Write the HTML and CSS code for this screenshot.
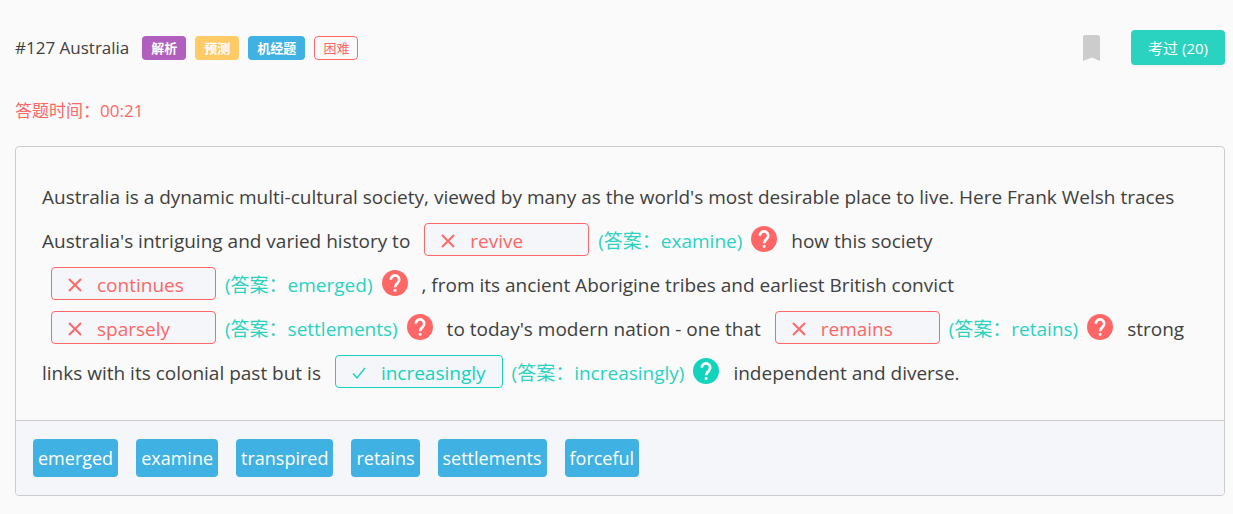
FILE: index.html
```html
<!DOCTYPE html>
<html lang="zh-CN">
<head>
<meta charset="utf-8">
<title>#127 Australia</title>
<meta name="viewport" content="width=device-width, initial-scale=1">
<link rel="stylesheet" href="styles.css">
</head>
<body>
<svg class="sprite" aria-hidden="true">
  <symbol id="cross" viewBox="0 0 14 14"><path d="M1 1l12 12M13 1L1 13" fill="none" stroke="currentColor" stroke-width="1.900"/></symbol>
  <symbol id="check" viewBox="0 0 14 14"><path d="M1 7.500l4 4.500L13 2" fill="none" stroke="currentColor" stroke-width="1.400"/></symbol>
  <symbol id="help" viewBox="0 0 26 26"><circle cx="13" cy="13" r="13" fill="currentColor"/><path d="M8.800 9.700a4.200 4.200 0 1 1 7 3.100c-1.700 1.400-2.700 2.200-2.700 4.400" fill="none" stroke="#fff" stroke-width="2.700"/><rect x="11.700" y="19" width="2.800" height="2.800" rx="1" fill="#fff"/></symbol>
</svg>
<header class="header">
  <h1 class="title">#127 Australia</h1>
  <div class="tags">
    <span class="tag tag-purple">解析</span>
    <span class="tag tag-yellow">预测</span>
    <span class="tag tag-blue">机经题</span>
    <span class="tag tag-outline">困难</span>
  </div>
  <button class="bookmark" type="button" aria-label="收藏"><svg width="18" height="26" viewBox="0 0 18 26"><path d="M2.500 0h12A2.500 2.500 0 0 1 17 2.500V26l-8-3.500L0 26V2.500A2.500 2.500 0 0 1 2.500 0z" fill="#ccc"/></svg></button>
  <button class="passed" type="button">考过 (20)</button>
</header>
<p class="timer">答题时间：00:21</p>
<main class="card">
  <p class="passage">
    Australia is a dynamic multi-cultural society, viewed by many as the world's most desirable place to live. Here Frank Welsh traces Australia's intriguing and varied history to
    <span class="slot wrong"><span class="blank"><svg class="mark"><use href="#cross"/></svg>revive</span><span class="answer">(答案：examine)</span><button class="help" type="button" aria-label="解释"><svg><use href="#help"/></svg></button></span>
    how this society
    <span class="slot wrong"><span class="blank"><svg class="mark"><use href="#cross"/></svg>continues</span><span class="answer">(答案：emerged)</span><button class="help" type="button" aria-label="解释"><svg><use href="#help"/></svg></button></span>
    , from its ancient Aborigine tribes and earliest British convict
    <span class="slot wrong"><span class="blank"><svg class="mark"><use href="#cross"/></svg>sparsely</span><span class="answer">(答案：settlements)</span><button class="help" type="button" aria-label="解释"><svg><use href="#help"/></svg></button></span>
    to today's modern nation - one that
    <span class="slot wrong"><span class="blank"><svg class="mark"><use href="#cross"/></svg>remains</span><span class="answer">(答案：retains)</span><button class="help" type="button" aria-label="解释"><svg><use href="#help"/></svg></button></span>
    strong links with its colonial past but is
    <span class="slot right"><span class="blank"><svg class="mark"><use href="#check"/></svg>increasingly</span><span class="answer">(答案：increasingly)</span><button class="help" type="button" aria-label="解释"><svg><use href="#help"/></svg></button></span>
    independent and diverse.
  </p>
  <div class="bank">
    <button class="word" type="button">emerged</button>
    <button class="word" type="button">examine</button>
    <button class="word" type="button">transpired</button>
    <button class="word" type="button">retains</button>
    <button class="word" type="button">settlements</button>
    <button class="word" type="button">forceful</button>
  </div>
</main>
</body>
</html>
```
FILE: styles.css
```css
* { box-sizing: border-box; }
body {
  margin: 0;
  padding: 30px 8px 18px 15px;
  background: #fafafa;
  color: #404040;
  font-family: "Open Sans", "Noto Sans CJK SC", sans-serif;
}
button { font: inherit; border: 0; padding: 0; background: none; cursor: pointer; }
svg { display: block; }
.sprite { display: none; }

.header { display: flex; align-items: center; height: 35px; }
.title { margin: 0; font-size: 17px; font-weight: 400; }
.tags { display: flex; gap: 9px; margin-left: 13px; }
.tag {
  height: 24px;
  padding: 0 9px;
  border-radius: 4px;
  color: #fff;
  font-size: 13px;
  font-weight: 700;
  line-height: 24px;
}
.tag-purple { background: #b15fbf; }
.tag-yellow { background: #ffcb66; }
.tag-blue { background: #3fb1e3; }
.tag-outline { padding: 0 8px; border: 1px solid #ff6666; color: #ff6666; font-weight: 400; line-height: 22px; }
.bookmark { margin-left: auto; }
.passed {
  height: 35px;
  margin-left: 30px;
  padding: 0 17px;
  border-radius: 4px;
  background: #2ad2c0;
  box-shadow: 0 2px 0 rgba(0, 0, 0, 0.03);
  color: #fff;
  font-size: 15px;
}

.timer { margin: 32px 0 21px; color: #ff6666; font-size: 17px; line-height: 28px; }

.card { border: 1px solid #ccc; border-radius: 4px; font-size: 19px; overflow: hidden; }
.passage { margin: 0; padding: 28px 25px 25px 26px; line-height: 44px; }
.slot {
  display: inline-flex;
  align-items: center;
  gap: 9px;
  height: 44px;
  margin: 0 9px;
  line-height: 28px;
  vertical-align: top;
  white-space: nowrap;
}
.wrong { color: #ff6666; }
.right { color: #12d4be; }
.blank {
  display: inline-flex;
  align-items: center;
  gap: 15px;
  min-width: 165px;
  height: 33px;
  margin-bottom: 4px;
  padding: 3px 16px 0;
  border: 1px solid currentColor;
  border-radius: 4px;
  background: #f4f6f9;
}
.mark { width: 14px; height: 14px; }
.answer { color: #2ad2c0; }
.help { margin-bottom: 4px; color: inherit; }
.help svg { width: 26px; height: 26px; }

.bank {
  display: flex;
  flex-wrap: wrap;
  gap: 18px;
  padding: 18px 17px;
  border-top: 1px solid #ccc;
  background: #f4f6f9;
}
.word { height: 38px; padding: 0 5px; border-radius: 4px; background: #3fb1e3; color: #fff; font-size: 18px; }
```
